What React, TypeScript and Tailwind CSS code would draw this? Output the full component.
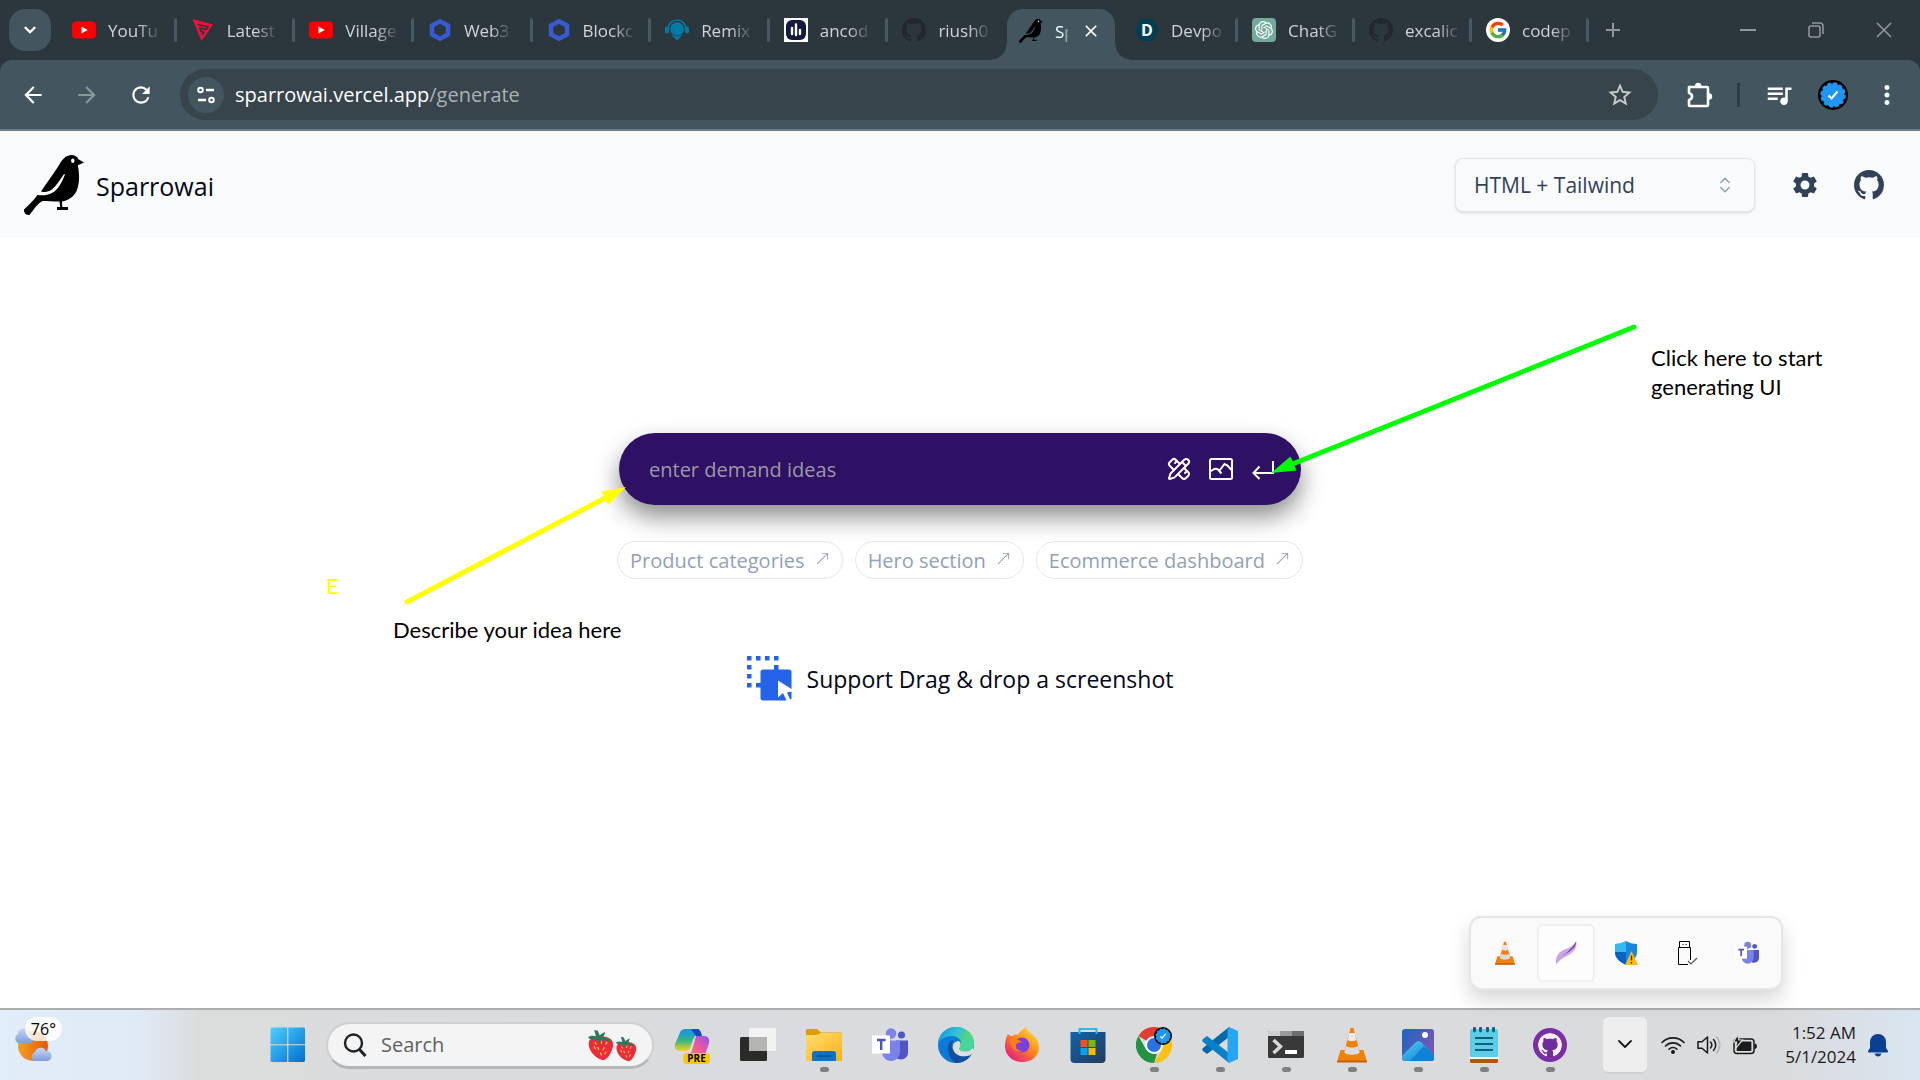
import React from "react";
import { BsGithub, BsArrowUpRight } from "react-icons/bs";
import { FcGoogle } from "react-icons/fc";
import { SiOpenai } from "react-icons/si";
import {
  MdArrowBack,
  MdArrowForward,
  MdRefresh,
  MdStarOutline,
  MdQueueMusic,
  MdMoreVert,
  MdSettings,
  MdAdd,
  MdClose,
} from "react-icons/md";
import { ChevronDown, ChevronsUpDown, PencilRuler } from "lucide-react";

type IconProps = { className?: string };

/* ---------- favicons and logos ---------- */

function Bird({ className = "size-6" }: IconProps) {
  return (
    <svg viewBox="0 0 60 60" className={className} aria-hidden="true">
      <path
        d="M47 0c4 0 6.500 2 7.400 4.200L60 7.600l-6.200 2.600c1.600 8 2.200 17-1.300 26-3 5.500-8 9.300-14.500 10.300l.3 5.500H44v3H33v-3h3.200l-.7-5.500c-6-.3-12-.6-17-.6C14 48 10 54 5.500 60 3 60.500-.5 58.500 0 54.500c5-5 9.500-9 13.500-14.500 4.500 1 12 0 17-3.500 5-4 8-11 10.500-17l-1-.6c-4 6-8 12-12 15.500-4 2.500-9 3-11 2.200C22 29 27 22 31.500 15.500 36 10 38 1 47 0z"
        fill="#000"
      />
      <ellipse cx="48.800" cy="5.800" rx="1.700" ry="2.200" fill="#f9fafc" />
    </svg>
  );
}

function YouTubeIcon() {
  return (
    <svg viewBox="0 0 24 24" className="size-6" aria-hidden="true">
      <rect y="3.500" width="24" height="17" rx="4" fill="#f00" />
      <path d="M9.500 8.500v7l6.200-3.500z" fill="#fff" />
    </svg>
  );
}

function RedWedge() {
  return (
    <svg viewBox="0 0 24 24" className="size-6" aria-hidden="true">
      <path d="M1.500 1 22 6.500 10.500 23z" fill="#f0103a" />
      <path d="M6.500 6.500 17 9l-2 2.500-6-1.400 1 3.500 3 .6-1.800 3" fill="none" stroke="#2c373d" strokeWidth="1.600" />
    </svg>
  );
}

function Hexagon() {
  return (
    <svg viewBox="0 0 24 24" className="size-6" aria-hidden="true">
      <path d="M12 3.200 20 7.600v8.800l-8 4.400-8-4.400V7.600z" fill="none" stroke="#375bd2" strokeWidth="4.500" />
    </svg>
  );
}

function RemixIcon() {
  return (
    <svg viewBox="0 0 24 24" className="size-6" aria-hidden="true">
      <path d="M3 11a9 9 0 0 1 18 0" fill="none" stroke="#007aa6" strokeWidth="1.600" />
      <circle cx="12" cy="11" r="6.800" fill="#007aa6" />
      <rect x="0" y="8.500" width="4" height="7" rx="2" fill="#007aa6" />
      <rect x="20" y="8.500" width="4" height="7" rx="2" fill="#007aa6" />
      <path d="m6 16.500 6 2 6-2-6 6z" fill="#007aa6" />
    </svg>
  );
}

function AncodIcon() {
  return (
    <svg viewBox="0 0 24 24" className="size-6" aria-hidden="true">
      <rect width="24" height="24" fill="#fff" />
      <rect x="2" y="2" width="20" height="20" rx="6" fill="#14193f" />
      <path d="M8 10v6M12 6.500v10.500M16 12v4" stroke="#fff" strokeWidth="2.400" strokeLinecap="round" />
    </svg>
  );
}

function DevpostIcon() {
  return (
    <span className="flex size-6 items-center justify-center bg-[#003e54] text-base font-bold text-white [clip-path:polygon(25%_4%,75%_4%,100%_50%,75%_96%,25%_96%,0_50%)]">
      D
    </span>
  );
}

function ChatGptIcon() {
  return (
    <span className="flex size-6 items-center justify-center rounded bg-[#74aa9c] text-white">
      <SiOpenai className="size-[18px]" />
    </span>
  );
}

function GoogleIcon() {
  return (
    <span className="flex size-6 items-center justify-center rounded-full bg-white">
      <FcGoogle className="size-5" />
    </span>
  );
}

function VerifiedBadge({ className = "size-[30px]" }: IconProps) {
  return (
    <svg viewBox="0 0 30 30" className={className} aria-hidden="true">
      <circle cx="15" cy="15" r="15" fill="#000" />
      <circle cx="15" cy="15" r="11.500" fill="#2196f0" stroke="#2196f0" strokeWidth="2.500" strokeDasharray="3.600 2.420" />
      <path d="m10.500 15.500 3 3 6-7" fill="none" stroke="#fff" strokeWidth="2" />
    </svg>
  );
}

function SiteInfoIcon() {
  return (
    <svg viewBox="0 0 20 20" className="size-5" fill="none" stroke="#fff" strokeWidth="2" aria-hidden="true">
      <circle cx="4.500" cy="5" r="2.300" />
      <path d="M10 5h8M2 15h8" strokeWidth="2.400" />
      <circle cx="15.500" cy="15" r="2.300" />
    </svg>
  );
}

function PuzzleIcon() {
  return (
    <svg viewBox="0 0 28 28" className="size-7" fill="none" stroke="#fff" strokeWidth="2.600" strokeLinejoin="round" aria-hidden="true">
      <path d="M4 6h18a1 1 0 0 1 1 1v17a1 1 0 0 1-1 1H5a1 1 0 0 1-1-1v-5c4-1 4-6 0-7V7a1 1 0 0 1 1-1z" />
      <path d="M10 5a3.200 3.200 0 0 1 6.400 0zM24 12.300a3.200 3.200 0 0 1 0 6.400z" fill="#fff" stroke="none" />
    </svg>
  );
}

/* ---------- browser chrome ---------- */

type TabInfo = { title: string; icon: React.ReactNode };

const darkGithub = <BsGithub className="size-6 text-[#22282d]" />;

const leftTabs: TabInfo[] = [
  { title: "YouTu", icon: <YouTubeIcon /> },
  { title: "Latest", icon: <RedWedge /> },
  { title: "Village", icon: <YouTubeIcon /> },
  { title: "Web3", icon: <Hexagon /> },
  { title: "Blockc", icon: <Hexagon /> },
  { title: "Remix", icon: <RemixIcon /> },
  { title: "ancod", icon: <AncodIcon /> },
  { title: "riush0", icon: darkGithub },
];

const rightTabs: TabInfo[] = [
  { title: "Devpo", icon: <DevpostIcon /> },
  { title: "ChatG", icon: <ChatGptIcon /> },
  { title: "excalic", icon: darkGithub },
  { title: "codep", icon: <GoogleIcon /> },
];

function Tab({ tab, divider }: { tab: TabInfo; divider: boolean }) {
  return (
    <button type="button" className="flex h-10 min-w-0 flex-1 items-center pl-3.5 text-left">
      <span className="shrink-0">{tab.icon}</span>
      <span className="ml-3 mt-0.5 shrink-0 whitespace-nowrap text-[17px] text-[#cfd3d5] [mask-image:linear-gradient(to_right,black_60%,rgba(0,0,0,0.15))]">
        {tab.title}
      </span>
      <span className={divider ? "ml-auto h-6 w-[3px] shrink-0 rounded bg-[#455a64]" : "ml-auto"} />
    </button>
  );
}

function TabStrip() {
  return (
    <header className="flex h-[60px] items-center bg-[#2c373d] pl-[9px] pr-2">
      <button
        type="button"
        aria-label="Search tabs"
        className="flex h-[42px] w-[42px] shrink-0 items-center justify-center rounded-2xl bg-[#43555e] text-white"
      >
        <ChevronDown className="size-[18px]" strokeWidth={3.200} />
      </button>
      <nav className="ml-[7px] flex h-full flex-1 items-center" aria-label="Tabs">
        <div className="flex max-w-[949px] flex-1">
          {leftTabs.map((tab, i) => (
            <Tab key={tab.title} tab={tab} divider={i < leftTabs.length - 1} />
          ))}
        </div>
        <div className="relative mr-1.5 flex h-[51px] w-[108px] shrink-0 items-center self-end rounded-t-2xl bg-[#43555e] pb-2 pl-3">
          <span className="absolute -left-4 bottom-0 size-4 bg-[radial-gradient(circle_at_0_0,#2c373d_15px,#43555e_16px)]" />
          <span className="absolute -right-4 bottom-0 size-4 bg-[radial-gradient(circle_at_100%_0,#2c373d_15px,#43555e_16px)]" />
          <Bird />
          <span className="ml-3 mt-0.5 w-[14px] overflow-hidden whitespace-nowrap text-[17px] text-white [mask-image:linear-gradient(to_right,black_60%,transparent)]">
            Sp
          </span>
          <button type="button" aria-label="Close tab" className="ml-3 text-white">
            <MdClose className="size-5" />
          </button>
        </div>
        <div className="flex max-w-[468px] flex-1">
          {rightTabs.map((tab) => (
            <Tab key={tab.title} tab={tab} divider />
          ))}
        </div>
        <button type="button" aria-label="New tab" className="ml-3 text-[#8f979b]">
          <MdAdd className="size-6" />
        </button>
      </nav>
      <div className="flex items-center gap-[52px] pr-5 text-[#8f979b]">
        <button type="button" aria-label="Minimize">
          <svg viewBox="0 0 16 16" className="size-4" stroke="currentColor" strokeWidth="2">
            <path d="M0 8h16" />
          </svg>
        </button>
        <button type="button" aria-label="Restore">
          <svg viewBox="0 0 16 16" className="size-4" fill="none" stroke="currentColor" strokeWidth="1.600">
            <rect x="1" y="4" width="11" height="11" rx="2" />
            <path d="M4 1h8a3 3 0 0 1 3 3v8" />
          </svg>
        </button>
        <button type="button" aria-label="Close">
          <svg viewBox="0 0 16 16" className="size-4" stroke="currentColor" strokeWidth="1.600">
            <path d="m1 1 14 14M15 1 1 15" />
          </svg>
        </button>
      </div>
    </header>
  );
}

function Toolbar() {
  return (
    <div className="bg-[#2c373d]">
      <div className="flex h-[71px] items-center rounded-t-xl border-b-2 border-[#6e7b81] bg-[#43555e] pl-5 pr-[18px] text-white">
        <div className="flex items-center gap-7">
          <button type="button" aria-label="Back">
            <MdArrowBack className="size-[26px]" />
          </button>
          <button type="button" aria-label="Forward" className="text-[#8a969c]">
            <MdArrowForward className="size-[26px]" />
          </button>
          <button type="button" aria-label="Reload">
            <MdRefresh className="size-[26px]" />
          </button>
        </div>
        <div className="ml-[26px] flex h-[51px] flex-1 items-center rounded-full bg-[#38444b] pl-2 pr-6">
          <button
            type="button"
            aria-label="Site information"
            className="flex size-9 items-center justify-center rounded-full bg-[#43555e]"
          >
            <SiteInfoIcon />
          </button>
          <p className="ml-[11px] flex-1 text-xl">
            sparrowai.vercel.app<span className="text-[#aab1b4]">/generate</span>
          </p>
          <button type="button" aria-label="Bookmark" className="text-[#c9cccd]">
            <MdStarOutline className="size-7" />
          </button>
        </div>
        <button type="button" aria-label="Extensions" className="ml-[27px]">
          <PuzzleIcon />
        </button>
        <span className="ml-6 h-6 w-[3px] bg-[#2f3b41]" />
        <button type="button" aria-label="Media" className="ml-6">
          <MdQueueMusic className="size-[30px]" />
        </button>
        <button type="button" aria-label="Profile" className="ml-6">
          <VerifiedBadge />
        </button>
        <button type="button" aria-label="Menu" className="ml-6">
          <MdMoreVert className="size-[30px]" />
        </button>
      </div>
    </div>
  );
}

/* ---------- page ---------- */

function PageHeader() {
  return (
    <div className="flex h-[107px] items-center justify-between bg-[#f9fafc] pl-6 pr-9">
      <a href="#home" className="flex items-center gap-3 text-[25px] font-medium text-slate-950">
        <Bird className="size-[60px]" />
        <span className="pt-1">Sparrowai</span>
      </a>
      <div className="flex items-center">
        <label className="relative mr-[35px] flex items-center">
          <span className="sr-only">Output stack</span>
          <select className="h-[54px] w-[300px] appearance-none rounded-lg border border-slate-200 bg-[#f9fafc] pl-[18px] pt-[3px] text-[21px] font-medium text-slate-700 shadow-sm">
            <option>HTML + Tailwind</option>
          </select>
          <ChevronsUpDown className="pointer-events-none absolute right-5 size-5 text-slate-400" strokeWidth={1.800} />
        </label>
        <button type="button" aria-label="Settings" className="mr-[34px] text-slate-700">
          <MdSettings className="size-[30px]" />
        </button>
        <a href="#github" aria-label="GitHub" className="text-slate-700">
          <BsGithub className="size-[30px]" />
        </a>
      </div>
    </div>
  );
}

function PictureIcon() {
  return (
    <svg viewBox="0 0 24 24" className="size-6" fill="none" stroke="#fff" strokeWidth="2" aria-hidden="true">
      <rect x="1" y="2" width="22" height="20" rx="1.500" />
      <path d="M1 14.500 5.500 12q2-.8 3.500.5l3.500 4M10.500 13.500l5-6.500 3 1.500L23 13.500" />
    </svg>
  );
}

function ReturnIcon() {
  return (
    <svg viewBox="0 0 24 24" className="size-6" fill="none" stroke="#fff" strokeWidth="2" aria-hidden="true">
      <path d="M22 4v12H3M8.500 9.500 2.500 16l6 6" />
    </svg>
  );
}

function DragDropIcon() {
  return (
    <svg viewBox="0 0 45 45" className="size-[45px]" fill="#2563eb" aria-hidden="true">
      <path d="M0 0h4.500v4.500H0zM9 0h4.500v4.500H9zM18 0h4.500v4.500H18zM27 0h4.500v4.500H27zM0 9h4.500v4.500H0zM0 18h4.500v4.500H0zM0 27h4.500v4.500H0zM9 27h5v4.500H9zM27 9h4.500v5H27z" />
      <path d="M16 13.500h26a2.500 2.500 0 0 1 2.500 2.500v17L31 24.500v17l5-4.500 3.500 7.500H16a2.500 2.500 0 0 1-2.500-2.500V16a2.500 2.500 0 0 1 2.500-2.500z" />
      <path d="m44.500 35.500-4.500 1 3.200 7.200 1.300-1.400z" />
    </svg>
  );
}

const suggestions = ["Product categories", "Hero section", "Ecommerce dashboard"];

function Annotations() {
  return (
    <div className="pointer-events-none absolute left-1/2 top-0 w-[1920px] -translate-x-1/2 font-['Lato',sans-serif] text-[22px] leading-[29px] text-black">
      <svg viewBox="0 238 1920 480" className="h-[480px] w-[1920px]" aria-hidden="true">
        <g stroke="#0f0" fill="#0f0">
          <path d="M1634 327Q1460 396 1290 465" fill="none" strokeWidth="5" strokeLinecap="round" />
          <path d="m1271 473 19.500-16.500 6 14z" stroke="none" />
        </g>
        <g stroke="#ff0" fill="#ff0">
          <path d="m407 602 200-105" fill="none" strokeWidth="5" strokeLinecap="round" />
          <path d="m626 487-24.500 4.500L608 505z" stroke="none" />
        </g>
      </svg>
      <p className="absolute left-[1651px] top-[105px] w-44">Click here to start generating UI</p>
      <p className="absolute left-[326px] top-[333px] text-[#ff0]">E</p>
      <p className="absolute left-[393px] top-[377px] whitespace-nowrap">Describe your idea here</p>
    </div>
  );
}

function Workspace() {
  return (
    <main className="relative flex flex-1 flex-col items-center overflow-hidden bg-white pt-[195px]">
      <form className="flex h-[72px] w-[682px] items-center rounded-full bg-[#2e1065] pl-[30px] pr-[26px] shadow-[0_12px_24px_rgba(0,0,0,0.45)]">
        <input
          aria-label="Demand ideas"
          placeholder="enter demand ideas"
          className="min-w-0 flex-1 bg-transparent pt-0.5 text-xl text-white outline-none placeholder:text-[#9b99a4]"
        />
        <div className="flex items-center gap-[18px] text-white">
          <button type="button" aria-label="Design tools">
            <PencilRuler className="size-6" strokeWidth={2} />
          </button>
          <button type="button" aria-label="Upload image">
            <PictureIcon />
          </button>
          <button type="submit" aria-label="Generate">
            <ReturnIcon />
          </button>
        </div>
      </form>
      <div className="mt-9 flex gap-3">
        {suggestions.map((s) => (
          <button
            key={s}
            type="button"
            className="flex h-[38px] items-center gap-2.5 rounded-full border border-gray-200 px-3 text-xl text-slate-400"
          >
            <span className="pt-0.5">{s}</span>
            <BsArrowUpRight className="mb-1 size-[15px]" />
          </button>
        ))}
      </div>
      <div className="mt-[77px] flex items-center gap-[15px] text-[23px] text-slate-950">
        <DragDropIcon />
        <p className="pt-0.5">Support Drag &amp; drop a screenshot</p>
      </div>
      <Annotations />
    </main>
  );
}

/* ---------- taskbar ---------- */

function Weather() {
  return (
    <button type="button" aria-label="Weather" className="relative h-12 w-12">
      <svg viewBox="0 0 48 48" className="size-12" aria-hidden="true">
        <defs>
          <linearGradient id="sun" x1="0" x2="1">
            <stop offset="0" stopColor="#f0a020" />
            <stop offset="1" stopColor="#e8590c" />
          </linearGradient>
          <linearGradient id="cloud" x1="0" x2="0" y1="0" y2="1">
            <stop offset="0" stopColor="#c6d6f6" />
            <stop offset="1" stopColor="#7f9ddb" />
          </linearGradient>
        </defs>
        <circle cx="21" cy="25" r="15" fill="url(#sun)" />
        <path d="M6 22a5 5 0 0 1 0-9 6 6 0 0 1 11-3l4 12z" fill="url(#cloud)" />
        <path d="M22 40a5 5 0 0 1 1-9 6 6 0 0 1 11-1 5 5 0 0 1 1 10z" fill="url(#cloud)" />
      </svg>
      <span className="absolute -right-0.5 -top-1 rounded-full bg-white/80 px-1.5 text-base leading-6 text-black">76°</span>
    </button>
  );
}

function WindowsLogo() {
  return (
    <svg viewBox="0 0 36 36" className="size-9" aria-hidden="true">
      <defs>
        <linearGradient id="win" x1="0" y1="0" x2="1" y2="1">
          <stop offset="0" stopColor="#4cd0ff" />
          <stop offset="1" stopColor="#0070d0" />
        </linearGradient>
      </defs>
      <path d="M1.500.5h15.700v16.700H.5V1.500zM18.300.5h15.700l1 1v15.700H18.300zM.5 18.300h16.700V35H1.500l-1-1zM18.300 18.300H35V34l-1 1H18.300z" fill="url(#win)" />
    </svg>
  );
}

function Strawberry({ className }: IconProps) {
  return (
    <svg viewBox="0 0 30 36" className={className} aria-hidden="true">
      <path d="M2 14C5 8 14 6 21 9c6 1 9 5 8 11-2 7-5 13-10 15C10 34 0 24 2 14z" fill="#ee2b3b" />
      <path d="m9 15 1 2M16 14v2M22 15l-1 2M12 21l1 2M19 21l-1 2M8 20l1 2M15 27l1 2M21 26l-1 2" stroke="#ffc64d" strokeWidth="1.500" strokeLinecap="round" />
      <path d="M1 9c4-2 7-2 9 0L8 1l4 1 2 5 6-4c0 3-1 5-3 6 4 0 8 2 9 5-4 0-7-1-10-3l-2 5-5-5c-3 2-6 1-8-2z" fill="#2c7a5b" />
    </svg>
  );
}

function CopilotIcon() {
  return (
    <span className="relative block size-9">
      <svg viewBox="0 0 36 36" className="size-9" aria-hidden="true">
        <defs>
          <linearGradient id="cpA" x1="0" y1="0" x2="0" y2="1">
            <stop offset="0" stopColor="#1a8ff0" />
            <stop offset=".5" stopColor="#2fb58a" />
            <stop offset="1" stopColor="#f7d21e" />
          </linearGradient>
          <linearGradient id="cpB" x1="1" y1="0" x2="0" y2="1">
            <stop offset="0" stopColor="#8c52f0" />
            <stop offset=".5" stopColor="#ec56a0" />
            <stop offset="1" stopColor="#ff8a4a" />
          </linearGradient>
        </defs>
        <path d="M22 9h8c4 0 6 3 5 7l-3 9c-1 3-3 4-5 4H12c4 0 5-3 6-6l3-10c0-2 1-3 1-4z" fill="url(#cpB)" />
        <path d="M12 2h12c2 1 3 3 3 5l-4 1c-3 1-4 4-5 8l-2 5c-1 2-3 3-5 3H6c-4 0-6-3-5-7l4-9c1-4 3-6 7-6z" fill="url(#cpA)" />
        <path d="M17 2h7c2 1 3 3 4 7h-6z" fill="#1745c4" />
      </svg>
      <span className="absolute -bottom-px left-[9px] w-[27px] rounded-sm bg-[#fcc60e] text-center text-[10px] font-bold leading-[11px] text-black">PRE</span>
    </span>
  );
}

function TaskViewIcon() {
  return (
    <svg viewBox="0 0 36 36" className="size-9" aria-hidden="true">
      <rect x="0" y="10" width="27" height="24" rx="1.500" fill="#2b2b2a" />
      <rect x="9" y="1" width="27" height="23" rx="1.500" fill="#f2f2f2" />
      <rect x="9" y="10" width="18" height="14" fill="#b4b4b3" />
    </svg>
  );
}

function FolderIcon() {
  return (
    <svg viewBox="0 0 36 36" className="size-9" aria-hidden="true">
      <defs>
        <linearGradient id="fold" x1="0" y1="0" x2="1" y2="1">
          <stop offset="0" stopColor="#ffdc70" />
          <stop offset="1" stopColor="#f7b216" />
        </linearGradient>
      </defs>
      <path d="M0 3.500C0 2.500.7 2 1.500 2H11l4 3.500h19c1 0 2 .5 2 1.500v9H0z" fill="#dd9d05" />
      <path d="M0 8h11l4-2h19.500c1 0 1.500.5 1.500 1.500V34H0z" fill="url(#fold)" />
      <path d="M6 34V26.500A2.500 2.500 0 0 1 8.500 24h19a2.500 2.500 0 0 1 2.500 2.500V34z" fill="#1272bf" />
      <path d="M11 29h14" stroke="#0b4e8c" strokeWidth="1.500" />
    </svg>
  );
}

function TeamsIcon({ className = "size-9" }: IconProps) {
  return (
    <svg viewBox="0 0 36 36" className={className} aria-hidden="true">
      <circle cx="29.500" cy="8" r="3.600" fill="#5059c9" />
      <circle cx="19" cy="6.500" r="5.200" fill="#7b83eb" />
      <path d="M24 13.500h12v12c0 4-3 7-7 7-3 0-5-1-5-3z" fill="#4f56c4" />
      <path d="M10 13.500h18v10.500c0 6-4 10-9 10s-9-4-9-10z" fill="#7b83eb" />
      <rect x="0" y="8.500" width="18" height="18" fill="#fff" />
      <path d="M5 13h8.500M9.200 13v10" stroke="#4b53bc" strokeWidth="2.400" />
    </svg>
  );
}

function EdgeIcon() {
  return (
    <svg viewBox="0 0 36 36" className="size-9" aria-hidden="true">
      <defs>
        <linearGradient id="edgeA" x1="0" y1="0" x2="1" y2=".4">
          <stop offset="0" stopColor="#0f8ee0" />
          <stop offset=".5" stopColor="#30c0d8" />
          <stop offset="1" stopColor="#66e04c" />
        </linearGradient>
      </defs>
      <circle cx="18" cy="18" r="18" fill="#0b7ad6" />
      <path d="M0 16C1 6 9 0 18 0c10 0 18 7 18 15 0 6-4 9-9 9-4 0-6-1-6-3 0-1 2-2 2-5 0-4-4-7-9-7-6 0-11 3-14 7z" fill="url(#edgeA)" />
      <path d="M10 21c0-5 3-8 6-8-2 2-3 5-2 8 2 6 8 9 14 8 2 0 4-1 6-2-3 5-9 9-16 9C13 34 10 27 10 21z" fill="#104f9c" />
      <path d="M21 14c2 2 2 4 1 6-2 2 0 4 5 4 3 0 6-1 8-4l1 4-3 4c-8 3-16 1-18-6-1-4 1-8 6-8z" fill="#dcdde0" />
      <path d="M21.500 21c-1 2 2 3.500 6 3.500 4 0 7-2 8.500-6C36 13 34 9 31 8c-4 4-7 7-9 8 1 2 .500 4-.5 5z" fill="#48d49a" />
    </svg>
  );
}

function FirefoxIcon() {
  return (
    <svg viewBox="0 0 36 36" className="size-9" aria-hidden="true">
      <defs>
        <linearGradient id="ff" x1="1" y1="0" x2=".2" y2="1">
          <stop offset="0" stopColor="#fff44f" />
          <stop offset=".5" stopColor="#ff8a16" />
          <stop offset="1" stopColor="#e31587" />
        </linearGradient>
      </defs>
      <path d="M4 7c1 1 2 2 4 2 2-1 4-2 6-1 1-3 4-5 8-8 1 4 4 5 6 7 4 3 7 7 7 13 0 9-7 15-17 15S1 28 1 19c0-5 1-9 3-12z" fill="url(#ff)" />
      <circle cx="18" cy="18" r="7.500" fill="#7a3fe0" />
      <path d="M5 12c5-1 9 0 13 3-2 1-5 0-6 3-1 4 3 6 7 6-5 2-11-1-12-6z" fill="#ff7a1a" />
    </svg>
  );
}

function StoreIcon() {
  return (
    <svg viewBox="0 0 36 36" className="size-9" aria-hidden="true">
      <defs>
        <linearGradient id="store" x1="0" y1="0" x2="1" y2="1">
          <stop offset="0" stopColor="#0d66ae" />
          <stop offset="1" stopColor="#243a5e" />
        </linearGradient>
      </defs>
      <path d="M.5 5h35v27a4 4 0 0 1-4 4h-27a4 4 0 0 1-4-4z" fill="url(#store)" />
      <path d="M10.500 13H17.500v7h-7z" fill="#f25022" />
      <path d="M18.500 13h7v7h-7z" fill="#7fba00" />
      <path d="M10.500 21h7v7h-7z" fill="#00a4ef" />
      <path d="M18.500 21h7v7h-7z" fill="#ffb900" />
      <path d="M9.500 7V2h17v5" fill="none" stroke="#33b7ef" strokeWidth="2" />
    </svg>
  );
}

function ChromeIcon() {
  return (
    <span className="relative block size-9">
      <svg viewBox="0 0 36 36" className="size-9" aria-hidden="true">
        <path d="M18 18 2.400 9A18 18 0 0 1 33.600 9z" fill="#e33b2e" />
        <path d="M18 9h15.600a18 18 0 0 1-15.600 27l8-13.500z" fill="#fbc116" />
        <path d="M2.400 9 10 22.500l8 4.500h3L18 36A18 18 0 0 1 2.400 9z" fill="#229342" />
        <circle cx="18" cy="18" r="9" fill="#fff" />
        <circle cx="18" cy="18" r="7" fill="#2a72e5" />
      </svg>
      <VerifiedBadge className="absolute right-0 top-0 size-[18px]" />
    </span>
  );
}

function VsCodeIcon() {
  return (
    <svg viewBox="0 0 36 36" className="size-9" aria-hidden="true">
      <path d="M27 0v10L5 27l-4-3c-1-1-1-2 0-3z" fill="#0069ac" />
      <path d="M27 36V26L5 9l-4 3c-1 1-1 2 0 3z" fill="#0a80c8" />
      <path d="M27 0 36 4v28l-9 4-1.500-1.500V1.500z" fill="#27a5f2" />
    </svg>
  );
}

function TerminalIcon() {
  return (
    <svg viewBox="0 0 36 36" className="size-9" aria-hidden="true">
      <rect y="4" width="36" height="27" rx="1.500" fill="#393939" />
      <path d="M0 5.500C0 4.500.5 4 1.500 4H12v5H0z" fill="#cfcfcf" />
      <path d="M12 4h12v5H12z" fill="#9a9a9a" />
      <path d="M24 4h10.500c1 0 1.500.5 1.500 1.500V9H24z" fill="#6e6e6e" />
      <path d="m5.500 13 7 6.500-7 6.500" fill="none" stroke="#d8d8d8" strokeWidth="3.500" />
      <rect x="17" y="23" width="12" height="4" rx=".5" fill="#fff" />
    </svg>
  );
}

function VlcIcon({ className = "size-9" }: IconProps) {
  return (
    <svg viewBox="0 0 36 36" className={className} aria-hidden="true">
      <path d="M6.500 23h23l3.500 12H3z" fill="#f0820a" />
      <path d="M3.300 33.500h29.400L33 35.500H3z" fill="#c85c00" />
      <path d="M16.500 1h3l6.500 25c-2 3-14 3-16 0z" fill="#f57f0c" />
      <path d="M15.200 6h5.600l1.700 7c-2 1.500-7 1.500-9 0z" fill="#e8e8e8" />
      <path d="M12 19c3 2 9 2 12 0l1.700 6.500c-2 3-13.400 3-15.400 0z" fill="#dcdcdc" />
    </svg>
  );
}

function PhotosIcon() {
  return (
    <svg viewBox="0 0 36 36" className="size-9" aria-hidden="true">
      <defs>
        <linearGradient id="ph" x1="0" y1="0" x2="1" y2=".6">
          <stop offset="0" stopColor="#1768c0" />
          <stop offset="1" stopColor="#7c55b2" />
        </linearGradient>
        <linearGradient id="ph2" x1="0" y1="0" x2="1" y2="1">
          <stop offset="0" stopColor="#52d4f5" />
          <stop offset="1" stopColor="#0873d0" />
        </linearGradient>
      </defs>
      <rect x="2" y="2" width="32" height="32" rx="3" fill="url(#ph)" />
      <path d="m2 29 14-14c2-1.500 3-1.500 5 0l13 13v3a3 3 0 0 1-3 3H5a3 3 0 0 1-3-3z" fill="url(#ph2)" />
      <path d="M10 34 24 19l10 9v3a3 3 0 0 1-3 3z" fill="#0d80d8" />
      <circle cx="25" cy="8" r="3" fill="#fff" />
    </svg>
  );
}

function NotepadIcon() {
  return (
    <svg viewBox="0 0 36 36" className="size-9" aria-hidden="true">
      <path d="M4 30h28v4.500a1.500 1.500 0 0 1-1.500 1.500h-25A1.500 1.500 0 0 1 4 34.500z" fill="#b3560d" />
      <path d="M4 30h28v2H4z" fill="#fff" />
      <rect x="4" y="2" width="28" height="28" rx="1.500" fill="#60cde6" />
      <path d="M9 11h18M9 17h18M9 23h18" stroke="#0b5f80" strokeWidth="1.800" />
      <path d="M8.500 1v3M14.500 1v3M21.500 1v3M27.500 1v3" stroke="#0b5f80" strokeWidth="2.800" strokeLinecap="round" />
    </svg>
  );
}

function GithubDesktopIcon() {
  return (
    <span className="flex size-9 items-center justify-center">
      <span className="flex size-[34px] items-center justify-center rounded-full bg-[#7a2fa3]">
        <span className="size-6 overflow-hidden rounded-full bg-[#6f2b9a] text-[#f3eef7]">
          <BsGithub className="size-6" />
        </span>
      </span>
    </span>
  );
}

const apps: { name: string; icon: React.ReactNode; running: boolean }[] = [
  { name: "Copilot", icon: <CopilotIcon />, running: false },
  { name: "Task view", icon: <TaskViewIcon />, running: false },
  { name: "File Explorer", icon: <FolderIcon />, running: true },
  { name: "Teams", icon: <TeamsIcon />, running: false },
  { name: "Edge", icon: <EdgeIcon />, running: false },
  { name: "Firefox", icon: <FirefoxIcon />, running: false },
  { name: "Store", icon: <StoreIcon />, running: false },
  { name: "Chrome", icon: <ChromeIcon />, running: true },
  { name: "VS Code", icon: <VsCodeIcon />, running: true },
  { name: "Terminal", icon: <TerminalIcon />, running: true },
  { name: "VLC", icon: <VlcIcon />, running: true },
  { name: "Photos", icon: <PhotosIcon />, running: true },
  { name: "Notepad", icon: <NotepadIcon />, running: true },
  { name: "GitHub Desktop", icon: <GithubDesktopIcon />, running: true },
];

function WifiIcon() {
  return (
    <svg viewBox="0 0 24 18" className="h-[18px] w-6" fill="none" stroke="#1a1a1a" strokeWidth="1.600" strokeLinecap="round" aria-hidden="true">
      <path d="M1 6.500a15.500 15.500 0 0 1 22 0M4.500 10a10.500 10.500 0 0 1 15 0M8 13.200a5.600 5.600 0 0 1 8 0" />
      <circle cx="12" cy="16" r="1.200" fill="#1a1a1a" />
    </svg>
  );
}

function VolumeIcon() {
  return (
    <svg viewBox="0 0 24 20" className="h-5 w-6" fill="none" stroke="#1a1a1a" strokeWidth="1.500" strokeLinecap="round" strokeLinejoin="round" aria-hidden="true">
      <path d="M1 6.800h4L10.500 2v16L5 13.200H1z" />
      <path d="M13.500 7a4.500 4.500 0 0 1 0 6M16.500 4.500a8 8 0 0 1 0 11" />
      <path d="M19.500 2a11.500 11.500 0 0 1 0 16" stroke="#b3b4b6" />
    </svg>
  );
}

function BatteryIcon() {
  return (
    <svg viewBox="0 0 24 20" className="h-5 w-6" aria-hidden="true">
      <rect x="1" y="4" width="20" height="14.500" rx="3" fill="none" stroke="#1a1a1a" strokeWidth="1.500" />
      <rect x="3.600" y="6.600" width="14.800" height="9.300" rx="1" fill="#1a1a1a" />
      <path d="M22 9c2 0 2 4.500 0 4.500z" fill="#1a1a1a" stroke="#1a1a1a" />
      <path d="M4.800-.5.500 7h3.200L2.500 13.500 9.500 5H5.800z" fill="#1a1a1a" stroke="#dadbdc" strokeWidth="1.200" />
    </svg>
  );
}

function BellIcon() {
  return (
    <svg viewBox="0 0 20 24" className="h-6 w-5" fill="#0a3f91" aria-hidden="true">
      <path d="M10 1a8 8 0 0 1 8 8v6l2 3c.3 1 0 1.500-1 1.500H1c-1 0-1.300-.5-1-1.500l2-3V9a8 8 0 0 1 8-8zM6.500 20.500h7c-.5 2-2 3-3.500 3s-3-1-3.500-3z" />
    </svg>
  );
}

function FeatherIcon() {
  return (
    <svg viewBox="0 0 24 24" className="size-6" aria-hidden="true">
      <path d="M2 23.500C1 14 6 10 12 8c4-1.500 8-4 10-7.500C24 8 18 12 13 15c-4 2-8 4-11 8.500z" fill="#c9a6e6" />
      <path d="M2 23.500C6 15 17 10 22.300.5c0 6-7 10-11.300 13-4 2.500-7 6-9 10z" fill="#8338b5" />
    </svg>
  );
}

function ShieldIcon() {
  return (
    <svg viewBox="0 0 24 24" className="size-6" aria-hidden="true">
      <path d="M12 0c3 2 7 3 11 3v8c0 6-5 10-11 13C6 21 1 17 1 11V3c4 0 8-1 11-3z" fill="#1b86dd" />
      <path d="M12 0v11H1V3c4 0 8-1 11-3z" fill="#35b9f1" />
      <path d="M12 11v13C6 21 1 17 1 11z" fill="#0a63c0" />
      <path d="m17.500 10 6.500 14H11z" fill="#fdbb12" />
      <path d="M17.500 14.500v5M17.500 21v1.500" stroke="#3a2b00" strokeWidth="1.400" />
    </svg>
  );
}

function UsbIcon() {
  return (
    <svg viewBox="0 0 24 24" className="size-6" fill="none" stroke="#000" strokeWidth="1" aria-hidden="true">
      <path d="M5.500 6.500V.5h10v6M16.500 19V6.500h-12v17H14" />
      <path d="M8.500 3.500h1M11.500 3.500h1" strokeWidth="1.200" />
      <path d="m14 20 3 3 6-6" stroke="#555" strokeWidth="1.200" />
    </svg>
  );
}

const trayItems: { name: string; icon: React.ReactNode; active?: boolean }[] = [
  { name: "VLC", icon: <VlcIcon className="size-6" /> },
  { name: "Feather", icon: <FeatherIcon />, active: true },
  { name: "Security", icon: <ShieldIcon /> },
  { name: "USB", icon: <UsbIcon /> },
  { name: "Teams", icon: <TeamsIcon className="size-6" /> },
];

function TrayPopup() {
  return (
    <div className="absolute bottom-[90px] right-[137px] flex h-[74px] w-[314px] items-center justify-around rounded-xl border-2 border-[#e6e6e6] bg-[#fafafa] px-1 shadow-[0_10px_20px_rgba(0,0,0,0.16)]">
      {trayItems.map((item) => (
        <button
          key={item.name}
          type="button"
          aria-label={item.name}
          className={
            item.active
              ? "flex size-[58px] items-center justify-center rounded-md border-2 border-[#f0f0f0] bg-[#fdfdfd]"
              : "flex size-[58px] items-center justify-center"
          }
        >
          {item.icon}
        </button>
      ))}
    </div>
  );
}

function Taskbar() {
  return (
    <footer className="relative flex h-[72px] items-center border-t-2 border-[#abadaf] bg-[linear-gradient(to_right,#e1edf8_0,#dfeaf5_140px,#dbdcdc_200px,#dadbde_700px,#dadbdc_calc(100%_-_140px),#d9e5f0_100%)] pl-3 pr-8">
      <Weather />
      <div className="ml-auto flex items-center">
        <button type="button" aria-label="Start">
          <WindowsLogo />
        </button>
        <label className="ml-5 flex h-[47px] w-[328px] items-center rounded-full border-2 border-b-[3px] border-[#cfd0d1] border-b-[#b5b6b8] bg-[#f4f4f4] pl-[15px] pr-3.5">
          <svg viewBox="0 0 24 24" className="size-6 shrink-0" fill="none" stroke="#1f2326" strokeWidth="2.400" aria-hidden="true">
            <circle cx="10.500" cy="10" r="8.500" />
            <path d="m16.500 16.500 6 6.500" strokeWidth="3" />
          </svg>
          <input
            aria-label="Search"
            placeholder="Search"
            className="ml-3.5 min-w-0 flex-1 bg-transparent text-xl outline-none placeholder:text-[#5f6163]"
          />
          <Strawberry className="h-8 w-[27px]" />
          <Strawberry className="mt-2 h-[26px] w-6" />
        </label>
        <div className="ml-[5px] flex">
          {apps.map((app) => (
            <button
              key={app.name}
              type="button"
              aria-label={app.name}
              className="relative flex h-[70px] w-[66px] items-center justify-center"
            >
              {app.icon}
              {app.running && <span className="absolute bottom-2 h-[5px] w-[9px] rounded-full bg-[#808182]" />}
            </button>
          ))}
        </div>
      </div>
      <div className="ml-5 flex items-center">
        <button
          type="button"
          aria-label="Show hidden icons"
          className="flex h-[57px] w-11 items-center justify-center rounded-md border-b-2 border-[#d0d0d1] bg-[#eeeeee]"
        >
          <ChevronDown className="size-6 text-[#1a1a1a]" strokeWidth={1.800} />
        </button>
        <div className="ml-3.5 flex items-center gap-3">
          <WifiIcon />
          <VolumeIcon />
          <BatteryIcon />
        </div>
        <p className="ml-6 w-[75px] whitespace-nowrap text-right text-[17px] leading-6 text-[#1a1a1a]">
          1:52 AM
          <br />
          5/1/2024
        </p>
        <button type="button" aria-label="Notifications" className="ml-3">
          <BellIcon />
        </button>
      </div>
      <TrayPopup />
    </footer>
  );
}

export default function App() {
  return (
    <div className="flex min-h-screen flex-col bg-white font-['Open_Sans','Noto_Sans',sans-serif]">
      <TabStrip />
      <Toolbar />
      <PageHeader />
      <Workspace />
      <Taskbar />
    </div>
  );
}
